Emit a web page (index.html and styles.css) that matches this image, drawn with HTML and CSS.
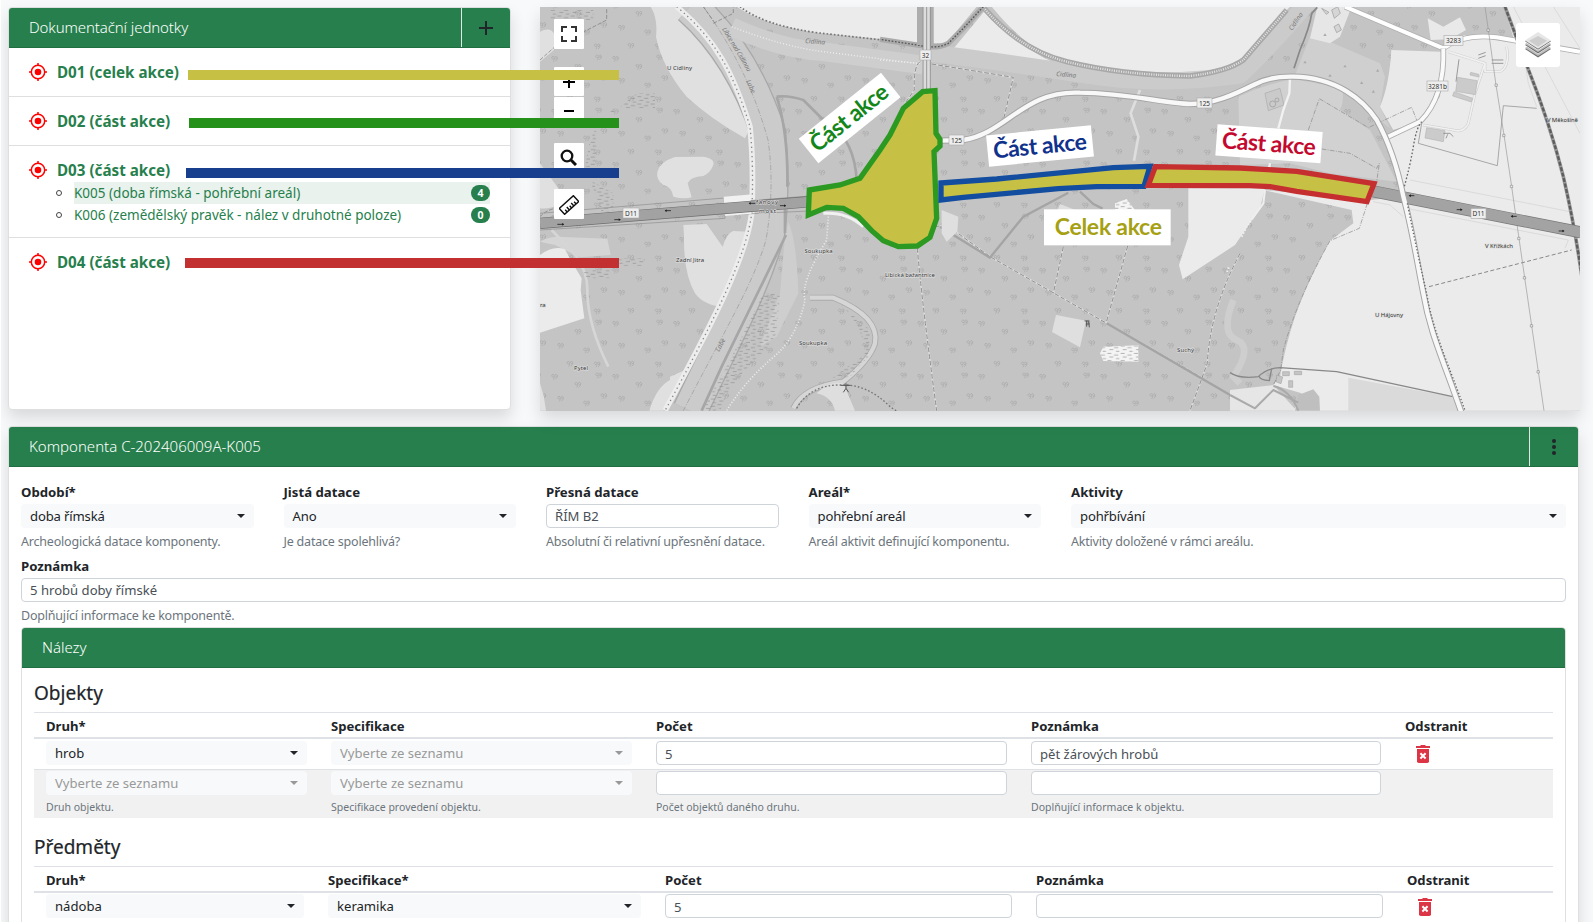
FILE: index.html
```html
<!DOCTYPE html>
<html lang="cs">
<head>
<meta charset="utf-8">
<title>Komponenta C-202406009A-K005</title>
<link rel="stylesheet" href="styles.css">
</head>
<body>
<svg width="0" height="0" class="defs">
  <symbol id="target" viewBox="0 0 18 18"><circle cx="9" cy="9" r="6.7" fill="none" stroke="#f00" stroke-width="1.5"/><circle cx="9" cy="9" r="3.3" fill="#f00"/><path d="M9 0v3M9 15v3M0 9h3M15 9h3" stroke="#f00" stroke-width="1.5"/></symbol>
  <symbol id="trash" viewBox="0 0 14 18"><path d="M0 1h4l1-1h4l1 1h4v2H0z" fill="#dc3545"/><path fill-rule="evenodd" d="M1 4h12v12.200q0 1.800-1.800 1.800H2.800Q1 18 1 16.200z" fill="#dc3545"/><path d="M4.400 8.300l5.200 5.200M9.600 8.300l-5.200 5.200" stroke="#fff" stroke-width="2"/></symbol>
</svg>
<main class="page">
  <div class="top">
    <section class="card units">
      <header class="card-header"><span class="t1">Dokumentační jednotky</span><button class="header-btn"><svg width="14" height="14"><path d="M7 0v14M0 7h14" stroke="#212529" stroke-width="2"/></svg></button></header>
      <ul class="unit-list">
        <li><a class="unit"><svg width="18" height="18"><use href="#target"/></svg>D01 (celek akce)</a></li>
        <li><a class="unit"><svg width="18" height="18"><use href="#target"/></svg>D02 (část akce)</a></li>
        <li class="open"><a class="unit"><svg width="18" height="18"><use href="#target"/></svg>D03 (část akce)</a>
          <div class="comp first"><i></i><p class="active"><span>K005 (doba římská - pohřební areál)</span><b>4</b></p></div>
          <div class="comp"><i></i><p><span>K006 (zemědělský pravěk - nález v druhotné poloze)</span><b>0</b></p></div>
        </li>
        <li class="last"><a class="unit"><svg width="18" height="18"><use href="#target"/></svg>D04 (část akce)</a></li>
      </ul>
      <span class="bar bar1"></span><span class="bar bar2"></span><span class="bar bar3"></span><span class="bar bar4"></span>
    </section>
    <section class="map">
      <svg class="map-svg" width="1040" height="404" viewBox="540 7 1040 404">
        <defs>
          <g id="tr" fill="none" stroke="#a6a6a6" stroke-width="1.900"><path d="M7 8Q1 9 0 5 0 0 4 0 8 0 8 5 8 12 5 16M11 8Q17 8 17 3 16-1 12 0 9 2 11 5M17 4Q18 10 11 15"/></g>
          <pattern id="woods" width="61" height="53" patternUnits="userSpaceOnUse"><g transform="scale(.3333)"><use href="#tr" x="8" y="10"/><use href="#tr" x="78" y="34"/><use href="#tr" x="140" y="6"/><use href="#tr" x="26" y="76"/><use href="#tr" x="104" y="90"/><use href="#tr" x="156" y="68"/><use href="#tr" x="54" y="130"/><use href="#tr" x="136" y="132"/></g></pattern>
          <pattern id="marsh" width="40" height="22" patternUnits="userSpaceOnUse"><path d="M2 4h12M22 9h13M8 15h12M28 20h10" stroke="#8e8e8e" stroke-width="2"/></pattern>
        </defs>
        <rect x="540" y="7" width="1040" height="404" fill="#c4c4c4"/>
        <rect x="540" y="7" width="1040" height="404" fill="url(#woods)"/>
        <!-- western part -->
        <g transform="translate(530 0) scale(.33333)" stroke-linejoin="round">
          <g fill="#e0e0e0">
            <path d="M362 20Q384 55 378 110C390 170 420 230 470 290Q540 355 645 415L665 375C640 290 600 220 550 140Q490 70 440 20z"/>
            <path d="M435 471L520 470Q555 475 550 495 540 520 520 528 480 530 473 550L485 592Q460 598 430 590 425 560 400 555 378 540 382 515 390 485 435 471z"/>
            <path d="M460 675L530 672 578 740Q590 700 610 693L655 695Q630 820 580 922 520 915 495 880 460 820 462 705z"/>
            <path d="M30 95Q60 80 72 100V150L30 185zM30 490L85 565 72 620Q45 628 30 625zM30 1150Q44 1190 48 1232H30z"/>
            <path d="M358 1232Q380 1160 420 1140V1130L465 1110 400 1232z"/>
          </g>
          <path d="M30 725Q60 705 120 712L232 716 242 765 150 772 75 735z" fill="#d5d5d5"/>
          <path d="M30 765Q70 735 105 748L122 780 140 810 155 835 152 870 163 955 30 998z" fill="#ebebeb"/>
          <path d="M620 20Q700 75 860 98L1170 128V20z" fill="#ebebeb"/>
          <path d="M65 690L140 770Q175 820 172 880 175 980 235 1100" fill="none" stroke="#d6d6d6" stroke-width="8"/>
          <path d="M480 20C580 110 660 230 715 400Q730 560 712 700C670 850 610 960 480 1232" fill="none" stroke="#a9a9a9" stroke-width="108"/>
          <path d="M480 20C580 110 660 230 715 400Q730 560 712 700C670 850 610 960 480 1232" fill="none" stroke="#cbcbcb" stroke-width="100"/>
          <path d="M520 20C600 130 670 260 714 420Q735 560 708 720C670 850 590 980 460 1232" fill="none" stroke="#999" stroke-width="2" stroke-dasharray="16 5 3 5"/>
          <path d="M440 20C560 120 610 220 660 380Q672 500 665 640C650 760 570 930 405 1232" fill="none" stroke="#ededed" stroke-width="17"/>
          <path d="M440 20C560 120 610 220 660 380Q672 500 665 640C650 760 570 930 405 1232" fill="none" stroke="#888" stroke-width="4" stroke-dasharray="4 10"/>
          <path d="M775 665Q800 720 805 880L740 1010 690 1040 750 880 765 710z" fill="#cecece"/>
          <path d="M700 880H750L740 1000 700 1060Q610 1130 570 1232H515L600 1080z" fill="url(#marsh)"/>
          <path d="M60 30h130v30H60zM320 280h55v45H240v20zM200 380v120h-35l15-80zM180 540l70 40v55h-35zM160 810h80v25h-80zM260 775h85v22h-85z" fill="url(#marsh)"/>
          <path d="M740 290Q775 285 820 300L880 360M740 290Q775 400 772 560M900 365Q975 430 980 540M765 600V700M768 705L575 1100 515 1232" fill="none" stroke="#a6a6a6" stroke-width="8"/>
          <path d="M550 70L610 40V20M555 70L520 20M30 180L75 140 230 60V25M30 650Q60 615 150 620" fill="none" stroke="#777" stroke-width="2" stroke-dasharray="12 5"/>
          <path d="M605 80Q760 150 880 155L1180 195" fill="none" stroke="#cecece" stroke-width="56"/>
          <path d="M605 80Q760 140 880 155L1160 190" fill="none" stroke="#eee" stroke-width="4" stroke-dasharray="3 6"/>
          <path d="M630 20Q700 75 860 98L1190 135" fill="none" stroke="#777" stroke-width="5" stroke-dasharray="5 6"/>
          <path d="M895 650L890 720Q810 850 825 900 800 1020 720 1080 640 1150 590 1232" fill="none" stroke="#eee" stroke-width="5" stroke-dasharray="3 6"/>
          <path d="M840 893H910Q1050 950 1035 1030 1020 1080 940 1145 820 1160 790 1225" fill="none" stroke="#aaa" stroke-width="18"/>
          <path d="M840 893H910Q1050 950 1035 1030 1020 1080 940 1145 820 1160 790 1225" fill="none" stroke="#d6d6d6" stroke-width="13"/>
          <path d="M930 910Q1000 980 1005 1060L900 1140 960 1130 1015 1070 1020 990z" fill="url(#marsh)"/>
          <path d="M860 1180Q900 1140 940 1150L975 1232H915Q905 1190 860 1180z" fill="#dedede"/>
          <path d="M800 1225Q840 1155 930 1155 1010 1150 1080 1220L1110 1240" fill="none" stroke="#777" stroke-width="4" stroke-dasharray="5 6"/>
          <path d="M948 1150v15l-8 12M948 1165l8 12M932 1156h30" fill="none" stroke="#555" stroke-width="3"/>
          <path d="M30 690L585 655V645L900 630" fill="none" stroke="#8d8d8d" stroke-width="2"/><path d="M30 640L583 594V608L840 588" fill="none" stroke="#8d8d8d" stroke-width="2"/>
          <path d="M30 664L830 599" fill="none" stroke="#f1f1f1" stroke-width="58" stroke-dasharray="0 555 80 400"/>
          <path d="M30 670L840 605" stroke="#6e6e6e" stroke-width="34"/><path d="M30 670L840 605" stroke="#a2a2a2" stroke-width="30"/>
          <path d="M880 640Q950 635 1000 680" fill="none" stroke="#f1f1f1" stroke-width="9"/>
          <path d="M82 673h20M253 659h18M405 632h18M658 610h18M750 617h18" stroke="#222" stroke-width="2.500"/>
          <path d="M102 673l-6-4v8zM272 659l-6-4v8zM404 632l6-4v8zM656 610l6-4v8zM768 617l-6-4v8z" fill="#222"/>
        </g>
        <!-- central part -->
        <g transform="translate(880 0) scale(.33333)" stroke-linejoin="round">
          <path d="M160 20H290L200 130H160zM312 35L220 146 515 185Q420 140 312 35z" fill="#ebebeb"/>
          <path d="M335 20Q450 160 560 190 720 225 930 228 1030 215 1080 180L1230 20z" fill="#ebebeb"/>
          <path d="M118 155Q400 190 620 225T1080 225Q1170 140 1290 0" fill="none" stroke="#cbcbcb" stroke-width="52"/>
          <path d="M0 180L120 190" stroke="#eee" stroke-width="4" stroke-dasharray="3 6"/>
          <path d="M310 22Q420 150 560 185 720 225 930 228 1040 215 1090 180L1220 30" fill="none" stroke="#a8a8a8" stroke-width="16"/>
          <path d="M310 22Q420 150 560 185 720 225 930 228 1040 215 1090 180L1220 30" fill="none" stroke="#e4e4e4" stroke-width="7" stroke-dasharray="3 4"/>
          <path d="M310 20L250 85 205 130Q170 148 118 136L0 118" fill="none" stroke="#aaa" stroke-width="16"/><path d="M310 20L250 85 205 130Q170 148 118 136L0 118" fill="none" stroke="#555" stroke-width="4" stroke-dasharray="5 5"/>
          <path d="M136 20V275" stroke="#adadad" stroke-width="50" stroke-dasharray="115 400"/>
          <path d="M140 20V275" stroke="#8f8f8f" stroke-width="24"/><path d="M140 20V275" stroke="#dcdcdc" stroke-width="19"/><path d="M140 20V275" stroke="#999" stroke-width="3"/>
          <path d="M120 185Q100 200 103 270L75 310M155 192L400 232 368 370M550 740L520 880M743 738L678 970M112 745Q125 900 170 1232M1080 760Q990 930 982 1090L930 1232M165 680L200 675 330 770 680 970 960 1130" fill="none" stroke="#ddd" stroke-width="5"/>
          <path d="M120 185Q100 200 103 270L75 310M155 192L400 232 368 370M550 740L520 880M743 738L678 970M112 745Q125 900 170 1232M1080 760Q990 930 982 1090L930 1232M165 680L200 675 330 770 680 970 960 1130" fill="none" stroke="#808080" stroke-width="2.500" stroke-dasharray="14 6"/>
          <path d="M180 680L330 773 430 650 565 578M600 575L640 612 668 626M680 970L1080 1202" fill="none" stroke="#a4a4a4" stroke-width="7"/>
          <path d="M185 630L235 650 232 695 200 725 185 700zM540 612L600 635 520 660zM528 945L618 962 600 1042 516 996z" fill="#dfdfdf"/>
          <path d="M705 610L740 597 765 630H705zM670 1040L775 1036V1085L670 1083 660 1060z" fill="#f4f4f4"/><path d="M705 610L740 597 765 630H705zM670 1040L775 1036V1085L670 1083 660 1060z" fill="url(#marsh)"/>
          <path d="M780 270L752 340 775 410 762 482" fill="none" stroke="#dedede" stroke-width="8"/>
          <path d="M925 565H1155L1140 625 1065 735 908 838 897 795 925 710z" fill="#ebebeb"/>
          <path d="M1155 570L1150 610 1100 680 1060 760 1040 820" fill="none" stroke="#efefef" stroke-width="6" stroke-dasharray="100 5 5 5 5 5 5 5 5 5 5 5 5"/>
          <path d="M1060 900Q1020 1000 1070 1020T1060 1130L1080 1150" fill="none" stroke="#cecece" stroke-width="20"/>
          <path d="M620 962v18M614 963h14M626 964l2 18M618 972h11" stroke="#555" stroke-width="3"/>
        </g>
        <!-- eastern part -->
        <g transform="translate(1230 0) scale(.33333)" stroke-linejoin="round">
          <path d="M25 290Q110 250 190 238L335 262Q345 300 330 330L420 390 500 545 300 520 180 490 30 495z" fill="#d1d1d1"/>
          <path d="M195 225L240 110 310 130 450 190 465 230 450 320 480 385 430 345Q330 230 195 225z" fill="#cfcfcf"/>
          <path d="M240 115L262 20H365L330 110 300 130z" fill="#e6e6e6"/>
          <path d="M484 150L632 155 640 200Q620 300 570 365L490 390 450 320Q478 255 484 150zM593 55L640 80 690 52 708 90 660 118 602 120z" fill="#e9e9e9"/>
          <path d="M640 150L700 105 855 128 822 20H1050V1232H190L215 1180 130 1155 150 1130Q165 1040 195 950 230 850 300 722L370 670 365 630 100 570 420 600 520 590 475 410 575 360 630 290z" fill="#ebebeb"/>
          <path d="M0 1170L130 1155 200 1232H0z" fill="#e6e6e6"/><path d="M195 1232L205 1185 250 1168 268 1190 270 1232z" fill="#bfbfbf"/><path d="M355 1133L665 1190 690 1232H355z" fill="#dadada"/>
          <path d="M105 280L150 265 162 315 115 332z" fill="#cacaca" stroke="#aaa" stroke-width="2"/><circle cx="128" cy="312" r="9" fill="none" stroke="#999" stroke-width="2"/><circle cx="141" cy="300" r="6" fill="none" stroke="#999" stroke-width="2"/>
          <path d="M192 205L210 150Q240 80 245 40L262 22" fill="none" stroke="#888" stroke-width="5"/>
          <path d="M180 232L178 280 160 330 145 385M120 490L105 560" fill="none" stroke="#f2f2f2" stroke-width="7"/>
          <path d="M235 390L268 296 415 383 545 322 560 360M275 447L360 460 440 505 448 490 440 545M412 610L388 685 300 722Q200 900 160 1050L152 1110 130 1155" fill="none" stroke="#888" stroke-width="2" stroke-dasharray="14 4 3 4"/>
          <path d="M305 30l18-10 8 20-18 15zM312 80l14-8 8 18-14 8zM275 25l14 18 8-6z" fill="#d5d5d5" stroke="#999" stroke-width="2"/>
          <path d="M345 20L640 145Q700 100 800 112L1050 155" fill="none" stroke="#b0b0b0" stroke-width="17"/><path d="M345 20L640 145Q700 100 800 112L1050 155" fill="none" stroke="#fff" stroke-width="12"/>
          <path d="M640 145Q645 290 570 365L475 410" fill="none" stroke="#aaa" stroke-width="17"/><path d="M640 145Q645 290 570 365L475 410" fill="none" stroke="#fafafa" stroke-width="12"/>
          <path d="M655 155L765 190 735 280 715 370Q700 400 670 390L580 375M765 190V215H810Q840 200 830 140" fill="none" stroke="#ccc" stroke-width="8"/><path d="M655 155L765 190 735 280 715 370Q700 400 670 390L580 375M765 190V215H810Q840 200 830 140" fill="none" stroke="#f1f1f1" stroke-width="5"/>
          <path d="M683 232L742 242 736 284 677 274zM672 275L728 295 724 306 668 288zM722 217l24 6v8l-26-6zM590 383L645 392 640 425 585 414z" fill="#cbcbcb" stroke="#aaa" stroke-width="1.500"/>
          <path d="M640 400h20l10 10M648 415l5-12M745 165l22-8M745 175l22-8M785 180h35M785 190h35M687 178L678 245" stroke="#888" stroke-width="2.500" fill="none"/>
          <path d="M565 430L802 497 820 317 920 325M565 430L575 370" fill="none" stroke="#999" stroke-width="2.500"/>
          <path d="M520 570Q540 500 550 440T575 365" fill="none" stroke="#666" stroke-width="4" stroke-dasharray="5 6"/>
          <path d="M540 540L1020 635M430 605L480 615 520 650M530 625L1015 720 1005 745M888 205L895 250 920 320M850 20L1050 400M970 20L1050 145" fill="none" stroke="#d2d2d2" stroke-width="2"/>
          <path d="M597 860L1025 750" fill="none" stroke="#888" stroke-width="3" stroke-dasharray="12 7"/>
          <path d="M825 20L888 190Q960 370 1000 530 1035 680 1060 860" fill="none" stroke="#999" stroke-width="11"/><path d="M825 20L888 190Q960 370 1000 530 1035 680 1060 860" fill="none" stroke="#5d5d5d" stroke-width="7" stroke-dasharray="12 5"/>
          <path d="M765 20L775 90 798 255 822 405 845 560 867 715 884 833 905 977 925 1115 942 1232" fill="none" stroke="#999" stroke-width="2"/>
          <path d="M771 87h7v7h-7zM795 252h7v7h-7zM818 403h7v7h-7zM841 556h7v7h-7zM863 712h7v7h-7zM880 830h7v7h-7zM901 974h7v7h-7zM921 1112h7v7h-7z" fill="#eee" stroke="#777" stroke-width="1.500"/>
          <path d="M430 574L1052 697" stroke="#787878" stroke-width="36"/><path d="M430 574L1052 697" stroke="#a3a3a3" stroke-width="32"/>
          <path d="M537 587h16M680 629h16M844 649h16M986 693h16" stroke="#222" stroke-width="2.500"/>
          <path d="M536 587l7-4v8zM698 629l-7-4v8zM842 649l7-4v8zM1004 693l-7-4v8z" fill="#222"/>
          <path d="M0 1118Q30 1138 85 1130 110 1105 150 1103L320 1115 668 1190M88 1130Q90 1140 118 1142L125 1105" fill="none" stroke="#888" stroke-width="4"/>
          <path d="M130 1158Q180 1170 205 1232M0 1185L75 1225 130 1170 205 1208" fill="none" stroke="#aaa" stroke-width="6"/>
          <path d="M140 1125l18 6-5 20-14-5zM158 1115h20v12h-20zM193 1114h22v10h-22zM176 1142h12v20h-12z" fill="#c5c5c5" stroke="#999" stroke-width="1.500"/>
          <path d="M220 190l5-8 5 8zM280 108l5-8 5 8zM295 230l5-8 5 8zM340 202l5-8 5 8zM425 278l5-8 5 8zM438 215l5-8 5 8zM390 252l5-8 5 8z" fill="#aaa"/>
        </g>
        <g transform="translate(880 0) scale(.33333)" fill="none">
          <path d="M185 422L250 420C380 400 430 270 600 278 750 280 850 310 930 312 1000 312 1060 285 1120 255Q1170 228 1240 230C1370 232 1450 300 1490 360 1540 450 1560 540 1570 590 1595 680 1610 780 1630 880 1650 1000 1690 1080 1745 1240" stroke="#a5a5a5" stroke-width="19"/>
          <path d="M185 422L250 420C380 400 430 270 600 278 750 280 850 310 930 312 1000 312 1060 285 1120 255Q1170 228 1240 230C1370 232 1450 300 1490 360 1540 450 1560 540 1570 590 1595 680 1610 780 1630 880 1650 1000 1690 1080 1745 1240" stroke="#f8f8f8" stroke-width="13"/>
          <path d="M1582 610Q1612 760 1640 880C1660 1000 1705 1090 1758 1240" stroke="#666" stroke-width="4" stroke-dasharray="4 6"/>
        </g>
        <!-- place names and road numbers -->
        <g class="place">
          <text x="667" y="69.500" textLength="25">U Cidliny</text><text x="676" y="261.500" textLength="28">Zadní Jitra</text><text x="540" y="307">ra</text><text x="574" y="370" textLength="14">Pytel</text>
          <text x="804.500" y="253" textLength="28">Soukupka</text><text x="799" y="344.500" textLength="28">Soukupka</text><text x="885" y="277" textLength="50">Libická bažantnice</text><text x="1177" y="352" textLength="17">Suchý</text>
          <text x="756" y="203.500" textLength="22">fanovy</text><text x="759" y="212.500" textLength="17">most</text>
          <text x="1547" y="122" textLength="31">V Měkošině</text><text x="1485" y="247.500" textLength="28">V Křížkách</text><text x="1375" y="316.500" textLength="28">U Hájovny</text>
        </g>
        <g class="water">
          <text x="805" y="43" transform="rotate(4 805 43)">Cidlina</text><text x="1056" y="76" transform="rotate(5 1056 76)">Cidlina</text><text x="1292" y="31" transform="rotate(-56 1292 31)">Cidlina</text>
          <text x="722" y="29" textLength="50" transform="rotate(59 722 29)">Libice nad Cidlinou</text><text x="746" y="81" transform="rotate(66 746 81)">Labe</text><text x="719" y="352" transform="rotate(-61 719 352)">Labe</text>
        </g>
        <g class="shield">
          <rect x="623" y="208" width="16" height="10"/><text x="631" y="216">D11</text><rect x="920" y="50" width="11" height="10"/><text x="925.500" y="57.500">32</text>
          <rect x="949" y="135" width="15" height="10"/><text x="956.500" y="142.500">125</text><rect x="1197" y="98" width="15" height="10"/><text x="1204.500" y="105.500">125</text>
          <rect x="1444" y="35.500" width="19" height="10"/><text x="1453.500" y="43">3283</text><rect x="1427" y="81" width="21" height="10"/><text x="1437.500" y="88.500">3281b</text>
          <rect x="1471" y="208.500" width="15" height="10"/><text x="1478.500" y="216">D11</text>
        </g>
        <!-- excavation areas -->
        <g transform="translate(880 0) scale(.33333)" fill="#c6c144" stroke-width="16">
          <path stroke="#2c9a22" d="M-212 570L-120 555-60 535 0 450 30 405 70 325 128 275 165 272 168 400 180 418V438L162 455 170 655 150 712 112 738 55 740 10 722-25 692-65 650-110 625-160 622-215 645z"/>
          <path stroke="#134d9f" d="M183 549L350 537 700 503 810 499 792 559 650 560 535 566 250 592 183 600z"/>
          <path stroke="#c62f30" d="M826 500L1080 504 1250 514 1482 551 1461 605 1250 574 1170 560 1110 557 805 556z"/>
        </g>
        <g transform="translate(880 0) scale(.33333)" class="tag">
          <g transform="translate(-91 354) rotate(-38.700)"><rect x="-158" y="-47" width="316" height="94"/><text x="-141" y="22" textLength="280" fill="#13861a">Část akce</text></g>
          <g transform="translate(480 438) rotate(-5.600)"><rect x="-158" y="-47" width="316" height="94"/><text x="-141" y="24" textLength="282" fill="#10318c">Část akce</text></g>
          <g transform="translate(1167 431) rotate(4.200)"><rect x="-158" y="-47" width="316" height="94"/><text x="-141" y="24" textLength="282" fill="#c4092f">Část akce</text></g>
          <rect x="492" y="628" width="380" height="108"/><text x="524" y="705" textLength="322" fill="#a6a013">Celek akce</text>
        </g>
      </svg>
      <div class="controls">
        <button><svg width="16" height="16"><path d="M1 6V1h5M10 1h5v5M15 10v5h-5M6 15H1v-5" fill="none" stroke="#333" stroke-width="2"/></svg></button>
        <button class="zin"><svg width="12" height="12"><path d="M6 0v12M0 6h12" stroke="#000" stroke-width="2"/></svg></button>
        <button class="zout"><svg width="10" height="2"><path d="M0 1h10" stroke="#000" stroke-width="2"/></svg></button>
        <button class="find"><svg width="17" height="17"><circle cx="7" cy="7" r="5.300" fill="none" stroke="#111" stroke-width="2.300"/><path d="M11 11l5 5" stroke="#111" stroke-width="3"/></svg></button>
        <button class="measure"><svg width="20" height="20"><g transform="rotate(-42 10 10)" fill="none" stroke="#111" stroke-width="1.400"><rect x="0.500" y="6" width="19" height="8"/><path d="M4 14v-3M7 14v-4M10 14v-3M13 14v-4M16 14v-3"/></g></svg></button>
      </div>
      <button class="layers"><svg width="28" height="28" viewBox="0 0 28 28"><path d="M1 18l13-8 13 8-13 8.500z" fill="#6f6f6f"/><path d="M1 17l13-8 13 8-13 8z" fill="#bdbdbd"/><path d="M1 14.500l13-8 13 8-13 8.500z" fill="#fff"/><path d="M1 14l13-8 13 8-13 8.500z" fill="#6f6f6f"/><path d="M1 13l13-8 13 8-13 8z" fill="#bdbdbd"/><path d="M1 11l13-8 13 8-13 8.500z" fill="#fff"/><path d="M1 10.300L14 2l13 8.300-13 8.500z" fill="#6f6f6f"/><path d="M1 9.500L14 1l13 8.500-13 8.300z" fill="#e6e6e6"/><path d="M5 9.700L14 5l9 4.700-9 6z" fill="#cdcdcd"/></svg></button>
    </section>
  </div>

  <section class="card component">
    <header class="card-header"><span>Komponenta C-202406009A-K005</span><button class="header-btn dots"><i></i><i></i><i></i></button></header>
    <div class="body">
      <div class="fields">
        <div class="field"><label>Období*</label><div class="select">doba římská</div><small>Archeologická datace komponenty.</small></div>
        <div class="field"><label>Jistá datace</label><div class="select">Ano</div><small>Je datace spolehlivá?</small></div>
        <div class="field"><label>Přesná datace</label><div class="input">ŘÍM B2</div><small>Absolutní či relativní upřesnění datace.</small></div>
        <div class="field"><label>Areál*</label><div class="select">pohřební areál</div><small>Areál aktivit definující komponentu.</small></div>
        <div class="field"><label>Aktivity</label><div class="select">pohřbívání</div><small>Aktivity doložené v rámci areálu.</small></div>
      </div>
      <div class="field note"><label>Poznámka</label><div class="input">5 hrobů doby římské</div><small>Doplňující informace ke komponentě.</small></div>
      <section class="finds">
        <header class="card-header"><span>Nálezy</span></header>
        <h5>Objekty</h5>
        <div class="table t-obj">
          <div class="tr th"><b>Druh*</b><b>Specifikace</b><b>Počet</b><b>Poznámka</b><b>Odstranit</b></div>
          <div class="tr r1"><div><div class="select">hrob</div></div><div><div class="select mute">Vyberte ze seznamu</div></div><div><div class="input num">5</div></div><div><div class="input num">pět žárových hrobů</div></div><div><svg class="trash" width="14" height="18"><use href="#trash"/></svg></div></div>
          <div class="tr r2"><div><div class="select mute">Vyberte ze seznamu</div><em>Druh objektu.</em></div><div><div class="select mute">Vyberte ze seznamu</div><em>Specifikace provedení objektu.</em></div><div><div class="input"></div><em>Počet objektů daného druhu.</em></div><div><div class="input"></div><em>Doplňující informace k objektu.</em></div><div></div></div>
        </div>
        <h5 class="h2nd">Předměty</h5>
        <div class="table t-pred">
          <div class="tr th"><b>Druh*</b><b>Specifikace*</b><b>Počet</b><b>Poznámka</b><b>Odstranit</b></div>
          <div class="tr r3"><div><div class="select">nádoba</div></div><div><div class="select">keramika</div></div><div><div class="input num">5</div></div><div><div class="input"></div></div><div><svg class="trash" width="14" height="18"><use href="#trash"/></svg></div></div>
        </div>
      </section>
    </div>
  </section>
</main>
</body>
</html>
```
FILE: styles.css
```css
* { box-sizing: border-box; }
body { margin: 0; height: 922px; overflow: hidden; background: #f8f9fb; color: #212529; font: 13.1px/20px "Noto Sans", "Open Sans", sans-serif; }
.defs { position: absolute; }
.page { height: 922px; padding: 7px 14px 0 7px; border-left: 1px solid #fff; overflow: hidden; }
.top { display: flex; gap: 29px; height: 404px; }
.card { background: #fff; border: 1px solid #dfdfdf; border-radius: 4px; box-shadow: 0 8px 16px rgba(0,0,0,.13); }
.card-header { display: flex; justify-content: space-between; height: 40px; padding-left: 20px; background: #267f4c; border-bottom: 1px solid #1f6f42; border-radius: 3px 3px 0 0; color: #fff; font-size: 15px; font-weight: 300; line-height: 38px; }
.t1 { letter-spacing: -.1px; }
.header-btn { display: flex; align-items: center; justify-content: center; width: 49px; padding: 0; background: none; border: 0; border-left: 1px solid #e6e6e6; }
.units { position: relative; width: 503px; height: 403px; flex: none; }
.unit-list { list-style: none; margin: 0; padding: 0; }
.unit-list li { height: 49px; padding: 13px 20px 0; border-bottom: 1px solid #dfdfdf; }
.unit-list li.open { height: 92px; }
.unit-list li.last { border: 0; }
.unit { display: flex; align-items: center; gap: 10px; height: 22px; color: #267f4c; font-size: 15.200px; font-weight: 700; line-height: 22px; }
.comp { display: flex; align-items: center; height: 22px; padding-left: 27px; }
.comp.first { margin-top: 1px; }
.comp i { width: 6px; height: 6px; border: 1.300px solid #444; border-radius: 50%; margin-right: 12px; }
.comp p { display: flex; align-items: center; justify-content: space-between; flex: 1; margin: 0; height: 22px; color: #267f4c; font-size: 13.500px; }
.comp .active { background: #e9f2ed; }
.comp b { width: 19px; height: 16px; border-radius: 8px; background: #267f4c; color: #fff; font-size: 10.500px; line-height: 16px; text-align: center; }
.bar { position: absolute; z-index: 3; height: 10px; }
.bar1 { left: 179px; top: 62px; width: 431px; background: #c6c144; }
.bar2 { left: 180px; top: 110px; width: 430px; background: #25911b; }
.bar3 { left: 177px; top: 160px; width: 433px; background: #183f8e; }
.bar4 { left: 176px; top: 250px; width: 434px; background: #c33031; }
.map { position: relative; width: 1040px; height: 404px; flex: none; box-shadow: 0 8px 16px rgba(0,0,0,.13); }
.map-svg { display: block; }
.place text { font: 6px "Noto Sans", sans-serif; fill: #333; stroke: #e0e0e0; stroke-width: 1px; paint-order: stroke; }
.water text { font: italic 6.500px "Noto Sans", sans-serif; fill: #777; }
.shield rect { fill: #eee; stroke: #aaa; stroke-width: .6px; }
.shield text { font: 6.500px "Noto Sans", sans-serif; fill: #333; text-anchor: middle; }
.tag rect { fill: #fff; }
.tag text { font: 700 69px Lato, sans-serif; }
.controls { position: absolute; left: 14px; top: 12px; display: flex; flex-direction: column; }
.controls button { display: flex; align-items: center; justify-content: center; width: 30px; height: 30px; padding: 0; border: 0; border-radius: 1px; background: #fff; }
.controls .zin { margin-top: 18px; height: 29px; }
.controls .zout { margin-top: 1px; padding-bottom: 2px; }
.controls .find { margin-top: 16px; padding: 0 2px 1px 0; }
.controls .measure { margin-top: 16px; padding-top: 1px; }
.layers { position: absolute; right: 20px; top: 16px; display: flex; align-items: center; justify-content: center; width: 44px; height: 44px; padding: 0; border: 0; border-radius: 3px; background: #fff; }
.component { margin-top: 15px; height: 560px; }
.dots { flex-direction: column; gap: 2px; }
.dots i { width: 4px; height: 4px; border-radius: 50%; background: #212529; }
.body { padding: 15px 12px 0; }
.fields { display: grid; grid-template-columns: 232.500px 232.500px 232.500px 232.500px 1fr; column-gap: 30px; height: 74px; }
.field label { display: block; height: 22px; font-weight: 700; font-size: 13.200px; line-height: 20px; }
.field small { display: block; margin-top: 4px; color: #6c757d; font-size: 12.500px; line-height: 20px; letter-spacing: -.2px; }
.select, .input { position: relative; height: 24px; padding: 0 9px; border-radius: 4px; background: #f8f9fa; line-height: 24px; white-space: nowrap; }
.fields .select { letter-spacing: -.15px; }
.select::after { content: ""; position: absolute; right: 9px; top: 10px; border: 4px solid transparent; border-top-color: #212529; border-bottom: 0; }
.input { background: #fff; border: 1px solid #ced4da; padding: 0 8px; line-height: 22px; color: #495057; }
.mute { color: #999; }
.mute::after { border-top-color: #999; }
.finds { margin-top: 1px; border: 1px solid #dfdfdf; border-radius: 4px; height: 330px; padding: 0; }
h5 { margin: 0; padding: 11px 12px 0; height: 44px; font-size: 19px; font-weight: 400; line-height: 28px; -webkit-text-stroke: .2px #212529; }
.table { margin: 0 12px; border-top: 1px solid #dee2e6; }
.tr { display: grid; }
.t-obj .tr { grid-template-columns: 285px 325px 375px 374px 1fr; }
.t-pred .tr { grid-template-columns: 282px 337px 371px 371px 1fr; }
.tr > * { padding: 0 12px; }
.th { height: 26px; border-bottom: 2px solid #dee2e6; font-size: 13.100px; line-height: 26px; }
.r1 { height: 31px; padding-top: 2px; border-bottom: 1px solid #dee2e6; }
.r2 { height: 48px; padding-top: 1px; background: #f1f1f1; }
.r3 { padding-top: 1px; }
.num { line-height: 25px; }
.tr .select { line-height: 25px; }
.tr em { display: block; font-style: normal; font-size: 10.500px; line-height: 24px; color: #6c757d; }
.trash { display: block; margin: 4px 0 0 11px; }
.h2nd { height: 48px; padding-top: 15px; }
```
